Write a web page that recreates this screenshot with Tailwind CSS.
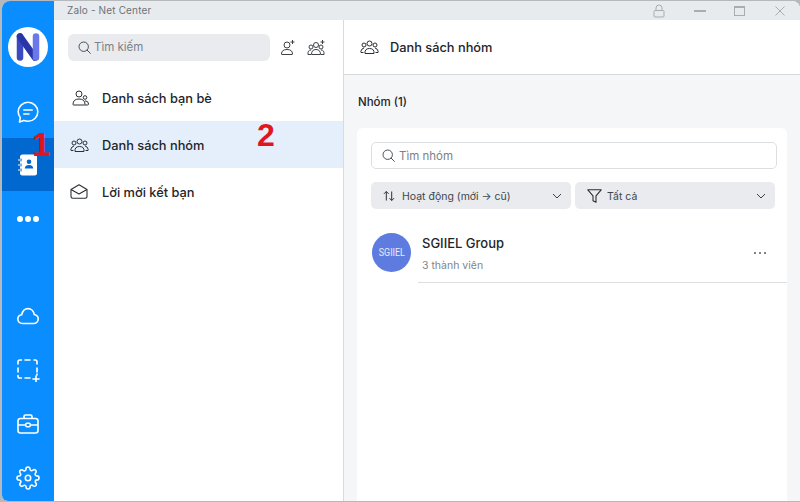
<!DOCTYPE html>
<html><head><meta charset="utf-8">
<script src="https://cdn.jsdelivr.net/npm/@tailwindcss/browser@4"></script>
</head>
<body class="m-0 bg-[#d9dadb]">
<div class="relative w-[800px] h-[502px] overflow-hidden pt-px pl-[2px] pb-[1px] font-['Inter','Noto_Sans',sans-serif] bg-[#b5b9bc]">
  <div class="flex h-[500px] w-[798px] rounded-t-lg rounded-bl-md overflow-hidden bg-white">
    <!-- Sidebar -->
    <aside class="w-[52px] shrink-0 bg-[#0a8dff] flex flex-col items-center text-white overflow-hidden">
      <div class="shrink-0 mt-[26px] mb-[18px] w-10 h-10 rounded-full bg-white flex items-center justify-center">
        <svg width="24" height="28" viewBox="0 0 24 28">
          <path d="M4 3.500v21" stroke="#3b49c4" stroke-width="6.500" stroke-linecap="round"/>
          <path d="M4 3.500l15 21" stroke="#2a36a8" stroke-width="6.500" stroke-linecap="round"/>
          <path d="M20 3.500v21" stroke="#6a78ea" stroke-width="6.500" stroke-linecap="round"/>
        </svg>
      </div>
      <div class="shrink-0 h-[53px] w-full flex items-center justify-center">
        <svg width="24" height="24" viewBox="0 0 24 24" fill="none" stroke="white" stroke-width="1.600" stroke-linecap="round" stroke-linejoin="round"><path d="M12 2.300c5.500 0 9.800 4.200 9.800 9.500s-4.300 9.500-9.800 9.500c-1.500 0-3-.3-4.200-.9l-4.300 1.500.8-4.300c-1.300-1.600-2.100-3.600-2.100-5.800 0-5.300 4.300-9.500 9.800-9.500z"/><path d="M7.800 10h8.400M7.800 14h5.200"/></svg>
      </div>
      <div class="shrink-0 h-[53px] w-full bg-[#0068cf] flex items-center justify-center">
        <svg width="21" height="22" viewBox="0 0 21 22"><rect x="2" y="0.500" width="17" height="21" rx="2.500" fill="white"/><path d="M.5 6h3.500M.5 11h3.500M.5 16h3.500" stroke="#0068cf" stroke-width="2.600"/><path d="M.5 6h3M.5 11h3M.5 16h3" stroke="white" stroke-width="1.200" stroke-linecap="round"/><circle cx="11" cy="7.800" r="2.300" fill="#0068cf"/><path d="M6.800 14.500c0-2.400 1.800-3.500 4.200-3.500s4.200 1.100 4.200 3.500z" fill="#0068cf"/></svg>
      </div>
      <div class="shrink-0 h-[53px] pt-[3px] w-full flex items-center justify-center gap-[2.500px]">
        <span class="w-[5.500px] h-[5.500px] rounded-full bg-white"></span><span class="w-[5.500px] h-[5.500px] rounded-full bg-white"></span><span class="w-[5.500px] h-[5.500px] rounded-full bg-white"></span>
      </div>
      <div class="shrink-0 mt-[45px] h-[54px] w-full flex items-center justify-center">
        <svg width="24" height="24" viewBox="0 0 24 24" fill="none" stroke="white" stroke-width="1.600" stroke-linejoin="round"><path d="M6.500 19.500c-2.700 0-4.700-1.900-4.700-4.400 0-2.300 1.700-4.100 4-4.400C6.500 7.200 8.900 4.600 12 4.600c3.300 0 5.800 2.500 6.200 5.900 2.300.4 4 2.200 4 4.600s-2 4.400-4.700 4.400z"/></svg>
      </div>
      <div class="shrink-0 h-[54px] w-full flex items-center justify-center">
        <svg width="24" height="24" viewBox="0 0 24 24" fill="none" stroke="white" stroke-width="1.600" stroke-linecap="round"><path d="M5.500 2H3.800Q2 2 2 3.800V6M9 2h5M18 2h1.200Q21 2 21 3.800V6M2 10v4M21 10v4M2 17.500v.7Q2 20 3.800 20H5.500M9 20h5M21 16v1M17 21h6M20 18v6" /></svg>
      </div>
      <div class="shrink-0 h-[54px] w-full flex items-center justify-center">
        <svg width="24" height="24" viewBox="0 0 24 24" fill="none" stroke="white" stroke-width="1.600" stroke-linejoin="round"><rect x="2" y="6.500" width="20" height="14.500" rx="2.500"/><path d="M8 6.500V4.500q0-1.500 1.500-1.500h5Q16 3 16 4.500v2M2 13h7.500M14.500 13H22"/><rect x="9.800" y="11.200" width="4.400" height="3.600" rx="1"/></svg>
      </div>
      <div class="shrink-0 h-[54px] w-full flex items-center justify-center">
        <svg width="24" height="24" viewBox="0 0 24 24" fill="none" stroke="white" stroke-width="1.600" stroke-linecap="round" stroke-linejoin="round"><circle cx="12" cy="12" r="2.700"/><path d="M19.400 15a1.650 1.650 0 0 0 .33 1.820l.06.06a2 2 0 1 1-2.830 2.830l-.06-.06a1.650 1.650 0 0 0-2.800 1.170V21a2 2 0 1 1-4 0v-.09A1.650 1.650 0 0 0 7.300 19.700l-.06.06a2 2 0 1 1-2.830-2.830l.06-.06a1.650 1.650 0 0 0-1.170-2.800H3a2 2 0 1 1 0-4h.09A1.650 1.650 0 0 0 4.300 7.300l-.06-.06a2 2 0 1 1 2.830-2.830l.06.06a1.650 1.650 0 0 0 2.800-1.170V3a2 2 0 1 1 4 0v.09a1.650 1.650 0 0 0 2.800 1.170l.06-.06a2 2 0 1 1 2.830 2.830l-.06.06a1.650 1.650 0 0 0 1.170 2.800H21a2 2 0 1 1 0 4h-.09a1.650 1.650 0 0 0-1.510 1z"/></svg>
      </div>
    </aside>

    <div class="flex-1 min-w-0 flex flex-col">
      <!-- Title bar -->
      <header class="h-[19px] shrink-0 bg-[#e8ebee] flex items-center pl-[13px] text-[10px] text-[#6d7378] tracking-[0.15px]">
        <span>Zalo - Net Center</span>
        <div class="ml-auto flex items-center">
          <svg class="mr-[29px]" width="12" height="14" viewBox="0 0 12 14" fill="none" stroke="#a9adb0" stroke-width="1"><rect x="1" y="6.500" width="10" height="6.500" rx="1"/><path d="M3 6.500V4q0-3 3-3t3 3v2.500"/></svg>
          <span class="mr-[28px] w-3 h-[2px] bg-[#a9adb0]"></span>
          <span class="mr-[30px] w-[11px] h-[10px] border border-[#a9adb0] border-t-2"></span>
          <svg class="mr-[15px]" width="10" height="10" viewBox="0 0 10 10" stroke="#a9adb0" stroke-width="1"><path d="M.5.500l9 9M9.500.500l-9 9"/></svg>
        </div>
      </header>

      <div class="flex flex-1 min-h-0">
        <!-- List panel -->
        <section class="w-[289px] shrink-0 bg-white flex flex-col">
          <div class="h-[54px] shrink-0 flex items-center pl-[14px]">
            <div class="w-[202px] h-[27px] rounded-md bg-[#e9ebee] flex items-center pl-[10px] gap-[3px] text-[11.500px] text-[#7b8288]">
              <svg width="13" height="13" viewBox="0 0 13 13" fill="none" stroke="#4a5056" stroke-width="1"><circle cx="5.700" cy="5.700" r="4.700"/><path d="M9.200 9.200L12.400 12.400" stroke-linecap="round"/></svg>
              <span class="pt-[2px]">Tìm kiếm</span>
            </div>
            <svg class="ml-[10px] mb-px" width="16" height="16" viewBox="0 0 16 16" fill="none" stroke="#3c4248" stroke-width="1"><circle cx="7" cy="6" r="3"/><path d="M1.500 15q0-4.500 5.500-4.500t5.500 4.500q0 .5-.5.500H2q-.5 0-.5-.5zM12.500 1v4M10.500 3h4"/></svg>
            <svg class="ml-[11px] mb-px" width="19" height="16" viewBox="0 0 19 16" fill="none" stroke="#3c4248" stroke-width="1"><circle cx="9" cy="6" r="2.500"/><circle cx="4" cy="8" r="2"/><circle cx="14" cy="8" r="2"/><path d="M4.500 15.500q0-5 4.500-5t4.500 5zM4 15.500H1q-.5-4.500 3-4.500M14 15.500h3q.5-4.500-3-4.500M15.500 1v4M13.500 3h4"/></svg>
          </div>

          <div class="h-[47px] flex items-center pl-[17px] gap-[12px] text-[12.800px] font-medium text-[#1e252b]">
            <span class="w-[19px] flex justify-center">
              <svg width="17" height="16" viewBox="0 0 17 16" fill="none" stroke="#2a3036" stroke-width="1"><circle cx="7" cy="4" r="3"/><circle cx="13" cy="7.500" r="1.800"/><path d="M1 14.500q0-5.500 6-5.500t6 5.500q0 .5-.5.500h-11q-.5 0-.5-.5zM13 11h1q2.500.5 2.500 3 0 1-1 1H13"/></svg>
            </span>
            <span class="pt-[2px]">Danh sách bạn bè</span>
          </div>
          <div class="h-[47px] flex items-center pl-[15px] gap-[12px] text-[12.800px] font-medium text-[#1e252b] bg-[#e5effc]">
            <span class="w-[21px] flex justify-center">
              <svg width="19" height="14" viewBox="0 0 19 14" fill="none" stroke="#2a3036" stroke-width="1"><circle cx="9.500" cy="3.500" r="2.500"/><circle cx="4" cy="5" r="2"/><circle cx="15" cy="5" r="2"/><path d="M5 13.500q-.5-5 4.500-5t4.500 5zM3.500 12.500H1q-.5-.5 0-1.500.5-2.500 3-3M15.500 12.500H18q.5-.5 0-1.500-.5-2.500-3-3"/></svg>
            </span>
            <span class="pt-[2px]">Danh sách nhóm</span>
          </div>
          <div class="h-[47px] flex items-center pl-[16px] gap-[14px] text-[12.800px] font-medium text-[#1e252b]">
            <span class="w-[18px] flex justify-center">
              <svg width="18" height="15" viewBox="0 0 18 15" fill="none" stroke="#2a3036" stroke-width="1.100" stroke-linejoin="round"><path d="M1 5.500L9 .8l8 4.700v7q0 1.700-1.700 1.700H2.700Q1 14.200 1 12.500z"/><path d="M1 5.500l8 4.500 8-4.500"/></svg>
            </span>
            <span class="pt-[2px]">Lời mời kết bạn</span>
          </div>
        </section>

        <!-- Detail -->
        <main class="flex-1 min-w-0 border-l border-[#d8dbde] flex flex-col bg-[#f4f6f8]">
          <div class="h-[55px] shrink-0 bg-white border-b border-[#d8dbde] flex items-center pl-[16px] gap-[11px] text-[12.800px] font-medium text-[#1e252b]">
            <svg width="19" height="14" viewBox="0 0 19 14" fill="none" stroke="#2a3036" stroke-width="1"><circle cx="9.500" cy="3.500" r="2.500"/><circle cx="4" cy="5" r="2"/><circle cx="15" cy="5" r="2"/><path d="M5 13.500q-.5-5 4.500-5t4.500 5zM3.500 12.500H1q-.5-.5 0-1.500.5-2.500 3-3M15.500 12.500H18q.5-.5 0-1.500-.5-2.500-3-3"/></svg>
            <span class="pt-[2px]">Danh sách nhóm</span>
          </div>
          <div class="h-[53px] shrink-0 flex items-center pl-[14px] pt-[2px] text-[11.500px] font-medium text-[#1e252b]">Nhóm (1)</div>
          <div class="flex-1 ml-[13px] mr-[13px] bg-white rounded-t-md pt-[14px] pl-[14px] pr-[11px] flex flex-col">
            <div class="h-[27px] w-[406px] shrink-0 rounded-[5px] border border-[#dcdfe2] flex items-center pl-[10px] gap-[4px] text-[11.500px] text-[#7b8288]">
              <svg width="13" height="13" viewBox="0 0 13 13" fill="none" stroke="#4a5056" stroke-width="1"><circle cx="5.700" cy="5.700" r="4.700"/><path d="M9.200 9.200L12.400 12.400" stroke-linecap="round"/></svg>
              <span class="pt-[3px]">Tìm nhóm</span>
            </div>
            <div class="mt-[13px] flex gap-[4px] shrink-0 text-[10.500px] text-[#3e454b]">
              <div class="w-[200px] h-[27px] rounded-[5px] bg-[#e9ebee] flex items-center pl-[12px] pr-[9px]">
                <svg class="mr-[7px]" width="12" height="12" viewBox="0 0 12 12" fill="none" stroke="#2a3036" stroke-width="1"><path d="M3.300 10.500V1.500M1 3.800l2.300-2.300 2.300 2.300M8.700 1.500v9M6.500 8.200l2.200 2.300 2.300-2.300"/></svg>
                <span class="pt-[2px]">Hoạt động (mới → cũ)</span>
                <svg class="ml-auto" width="10" height="6" viewBox="0 0 10 6" fill="none" stroke="#3a4046" stroke-width="1"><path d="M1 1l4 4 4-4"/></svg>
              </div>
              <div class="w-[200px] h-[27px] rounded-[5px] bg-[#e9ebee] flex items-center pl-[12px] pr-[9px]">
                <svg class="mr-[5px]" width="15" height="14" viewBox="0 0 15 14" fill="none" stroke="#2a3036" stroke-width="1.100" stroke-linejoin="round"><path d="M.8.800h13.400L9 6.800v6.400l-3-1.500V6.800z"/></svg>
                <span class="pt-[2px]">Tất cả</span>
                <svg class="ml-auto" width="10" height="6" viewBox="0 0 10 6" fill="none" stroke="#3a4046" stroke-width="1"><path d="M1 1l4 4 4-4"/></svg>
              </div>
            </div>
            <div class="mt-[24px] flex items-start shrink-0">
              <div class="ml-px w-[39px] h-[39px] shrink-0 rounded-full bg-[#5e7ce0] flex items-center justify-center text-[11.500px] text-white/85 font-['Roboto',sans-serif]"><span class="inline-block scale-x-[0.78]">SGIIEL</span></div>
              <div class="ml-[7px] flex-1 border-b border-[#dcdfe2] h-[50px] pl-[4px] relative -mr-[11px]">
                <div class="text-[13px] font-medium text-[#1e252b] leading-[17px] mt-[2px]">SGIIEL Group</div>
                <div class="text-[10.500px] text-[#80868b] leading-[14px] mt-[7px]">3 thành viên</div>
                <div class="absolute right-[21px] top-[19px] flex gap-[3px]">
                  <span class="w-[2px] h-[2px] rounded-full bg-[#555b60]"></span><span class="w-[2px] h-[2px] rounded-full bg-[#555b60]"></span><span class="w-[2px] h-[2px] rounded-full bg-[#555b60]"></span>
                </div>
              </div>
            </div>
          </div>
        </main>
      </div>
    </div>
  </div>
  <!-- Red annotations -->
  <span class="absolute left-[32px] top-[128px] text-[33px] leading-[34px] font-bold text-[#e0161c] font-['Liberation_Sans',sans-serif]">1</span>
  <span class="absolute left-[257px] top-[118px] text-[32px] leading-[34px] font-bold text-[#e0161c] font-['Liberation_Sans',sans-serif]">2</span>
</div>
</body></html>
